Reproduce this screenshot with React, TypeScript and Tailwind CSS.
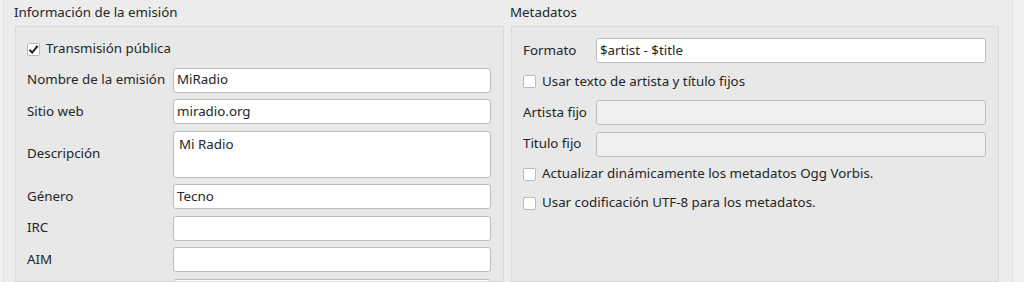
import React from 'react';

const font = { fontFamily: '"Noto Sans", "DejaVu Sans", sans-serif' };

const CheckBox = ({ checked, label }: { checked?: boolean; label: string }) => (
  <div className="flex items-center h-[24px] gap-[6px] shrink-0">
    <span className="w-[13px] h-[13px] bg-white border border-[#b9b9b9] rounded-[2px] flex items-center justify-center">
      {checked && (
        <svg width="11" height="11" viewBox="0 0 11 11">
          <path d="M1.5 5.8 L4.2 8.6 L9.6 1.8" fill="none" stroke="#1d1f20" strokeWidth="2" />
        </svg>
      )}
    </span>
    <span>{label}</span>
  </div>
);

const Field = ({ value, disabled }: { value?: string; disabled?: boolean }) => (
  <div
    className={`h-[25px] rounded-[3px] border border-[#bdbdbd] px-[3px] flex items-center ${
      disabled ? 'bg-[#efefef]' : 'bg-white'
    }`}
  >
    {value}
  </div>
);

const Row = ({ label, labelWidth, children }: { label: string; labelWidth: string; children: React.ReactNode }) => (
  <div className="flex items-center shrink-0">
    <span className={`${labelWidth} shrink-0`}>{label}</span>
    <div className="flex-1">{children}</div>
  </div>
);

export default function App() {
  return (
    <div className="w-[1024px] h-[282px] bg-[#efefef] text-[13.33px] text-[#232627] overflow-hidden flex" style={font}>
      <div className="ml-[3px] w-[1010px] h-full border-l border-r border-[#dcdcdc] bg-[#ececec] flex pl-[11px] pr-[13px] gap-[7px]">
        {/* left group */}
        <div className="flex flex-col w-[489px] min-h-0">
          <div className="h-[26px] shrink-0 flex items-center -ml-[1px] pb-[1px]">Información de la emisión</div>
          <div className="flex-1 min-h-0 overflow-hidden border border-[#d9d9d9] rounded-t-[2px] bg-[#e8e8e8] pt-[10px] pl-[11px] pr-[12px] flex flex-col gap-[6.5px]">
            <CheckBox checked label="Transmisión pública" />
            <Row label="Nombre de la emisión" labelWidth="w-[146px]">
              <Field value="MiRadio" />
            </Row>
            <Row label="Sitio web" labelWidth="w-[146px]">
              <Field value="miradio.org" />
            </Row>
            <Row label="Descripción" labelWidth="w-[146px]">
              <div className="h-[47px] rounded-[3px] border border-[#bdbdbd] bg-white px-[5px] pt-[3px]">Mi Radio</div>
            </Row>
            <Row label="Género" labelWidth="w-[146px]">
              <Field value="Tecno" />
            </Row>
            <Row label="IRC" labelWidth="w-[146px]">
              <Field />
            </Row>
            <Row label="AIM" labelWidth="w-[146px]">
              <Field />
            </Row>
            <Row label="" labelWidth="w-[146px]">
              <Field />
            </Row>
          </div>
        </div>
        {/* right group */}
        <div className="flex flex-col w-[488px] min-h-0">
          <div className="h-[26px] shrink-0 flex items-center -ml-[1px] pb-[1px]">Metadatos</div>
          <div className="flex-1 min-h-0 overflow-hidden border border-[#d9d9d9] rounded-t-[2px] bg-[#e8e8e8] pt-[11px] pl-[11px] pr-[12px] flex flex-col gap-[6.5px]">
            <Row label="Formato" labelWidth="w-[73px]">
              <Field value="$artist - $title" />
            </Row>
            <CheckBox label="Usar texto de artista y título fijos" />
            <Row label="Artista fijo" labelWidth="w-[73px]">
              <Field disabled />
            </Row>
            <Row label="Titulo fijo" labelWidth="w-[73px]">
              <Field disabled />
            </Row>
            <div className="flex flex-col gap-[5px] mt-[-1px]">
              <CheckBox label="Actualizar dinámicamente los metadatos Ogg Vorbis." />
              <CheckBox label="Usar codificación UTF-8 para los metadatos." />
            </div>
          </div>
        </div>
      </div>
    </div>
  );
}
